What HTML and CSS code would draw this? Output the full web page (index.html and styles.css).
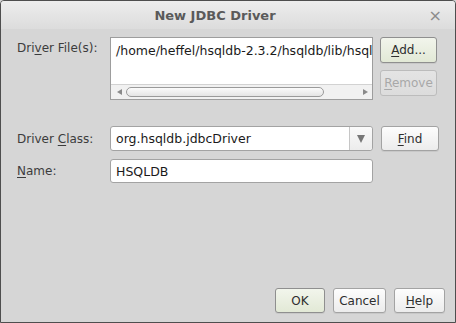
FILE: index.html
```html
<!DOCTYPE html>
<html lang="en">
<head>
  <meta charset="UTF-8" />
  <title>New JDBC Driver</title>
  <link rel="stylesheet" href="styles.css">
</head>
<body>
  <div class="window">
    <div class="titlebar">
      <span class="title">New JDBC Driver</span>
      <span class="close">&times;</span>
    </div>

    <div class="content">
      <div class="row row-files">
        <label class="lbl top">Dri<u>v</u>er File(s):</label>
        <div class="listbox">
          <div class="list-text">/home/heffel/hsqldb-2.3.2/hsqldb/lib/hsqldb.jar</div>
          <div class="hscroll">
            <span class="arrow left"></span>
            <span class="thumb"></span>
            <span class="arrow right"></span>
          </div>
        </div>
        <div class="side">
          <button class="btn default"><u>A</u>dd...</button>
          <button class="btn" disabled><u>R</u>emove</button>
        </div>
      </div>

      <div class="row row-class">
        <label class="lbl">Driver <u>C</u>lass:</label>
        <div class="combo">
          <span class="combo-text">org.hsqldb.jdbcDriver</span>
          <span class="combo-btn"><span class="tri"></span></span>
        </div>
        <button class="btn find"><u>F</u>ind</button>
      </div>

      <div class="row row-name">
        <label class="lbl"><u>N</u>ame:</label>
        <div class="field">HSQLDB</div>
      </div>

      <div class="footer">
        <button class="btn foot default ok">OK</button>
        <button class="btn foot cancel">Cancel</button>
        <button class="btn foot help"><u>H</u>elp</button>
      </div>
    </div>
  </div>
</body>
</html>
```

FILE: styles.css
```css
body {
  margin: 0;
  font-family: 'DejaVu Sans', 'Liberation Sans', sans-serif;
  font-size: 12px;
  background-color: #d6d6d6;
}

.window {
  width: 456px;
  height: 323px;
  box-sizing: border-box;
  border: 1px solid #4e4e4e;
  border-radius: 4px 4px 0 0;
  background-color: #d6d6d6;
  display: flex;
  flex-direction: column;
  overflow: hidden;
}

.titlebar {
  height: 28px;
  flex: none;
  display: flex;
  align-items: center;
  justify-content: center;
  position: relative;
  background: linear-gradient(#ededed, #dcdcdc);
}

.title {
  font-weight: bold;
  font-size: 13px;
  color: #5a5a5a;
  margin-left: -26px;
}

.close {
  position: absolute;
  right: 13px;
  top: 5px;
  font-size: 16px;
  color: #8c8c8c;
}

.content {
  flex: 1;
  display: flex;
  flex-direction: column;
  padding: 8px 0 9px 16px;
}

.row {
  display: flex;
  align-items: center;
}

.row-files {
  align-items: flex-start;
  height: 63px;
}

.row-class {
  margin-top: 26px;
  height: 25px;
}

.row-name {
  margin-top: 8px;
  height: 24px;
}

.lbl {
  width: 93px;
  flex: none;
  color: #3c3c3c;
}

.lbl.top {
  padding-top: 4px;
}

u {
  text-decoration: underline;
  text-underline-offset: 2px;
}

.listbox {
  width: 263px;
  height: 63px;
  flex: none;
  box-sizing: border-box;
  border: 1px solid #9d9d9d;
  background: #fff;
  display: flex;
  flex-direction: column;
  overflow: hidden;
}

.list-text {
  flex: 1;
  padding: 5px 0 0 5px;
  white-space: nowrap;
  color: #1a1a1a;
  font-size: 12.5px;
}

.hscroll {
  height: 14px;
  border-top: 1px solid #d2d2d2;
  background: #f1f1f1;
  display: flex;
  align-items: center;
  padding: 0 4px 0 6px;
  gap: 4px;
}

.arrow {
  width: 0;
  height: 0;
  border-top: 3px solid transparent;
  border-bottom: 3px solid transparent;
}

.arrow.left {
  border-right: 5px solid #8a8a8a;
}

.arrow.right {
  border-left: 5px solid #8a8a8a;
  margin-left: auto;
}

.thumb {
  width: 198px;
  height: 10px;
  box-sizing: border-box;
  border: 1px solid #9a9a9a;
  border-radius: 6px;
  background: linear-gradient(#fbfbfb, #e4e4e4);
}

.side {
  display: flex;
  flex-direction: column;
  gap: 7px;
  margin-left: 7px;
}

.btn {
  font-family: 'DejaVu Sans', 'Liberation Sans', sans-serif;
  font-size: 12px;
  color: #2e2e2e;
  height: 26px;
  width: 57px;
  flex: none;
  box-sizing: border-box;
  border: 1px solid #a3a3a3;
  border-radius: 3px;
  background: linear-gradient(#fdfdfd, #ececec);
  padding: 0;
  box-shadow: 0 1px 0 #c8c8c8;
}

.btn.default {
  border-color: #8f8f8f;
  background: linear-gradient(#f2f5ec, #e2e9d6);
}

.btn:disabled {
  color: #a8a8a8;
  border-color: #bcbcbc;
  background: linear-gradient(#e4e4e4, #dcdcdc);
  box-shadow: none;
}

.btn.find {
  height: 25px;
  width: 58px;
  margin-left: 8px;
}

.combo {
  width: 263px;
  height: 25px;
  flex: none;
  box-sizing: border-box;
  border: 1px solid #a3a3a3;
  border-radius: 3px;
  background: #fff;
  display: flex;
  align-items: center;
}

.combo-text {
  flex: 1;
  padding-left: 5px;
  color: #1a1a1a;
  font-size: 12.5px;
}

.combo-btn {
  width: 22px;
  height: 100%;
  border-left: 1px solid #c6c6c6;
  background: linear-gradient(#fafafa, #ececec);
  border-radius: 0 3px 3px 0;
  display: flex;
  align-items: center;
  justify-content: center;
}

.tri {
  width: 0;
  height: 0;
  border-left: 4px solid transparent;
  border-right: 4px solid transparent;
  border-top: 8px solid #777;
}

.field {
  width: 263px;
  height: 24px;
  flex: none;
  box-sizing: border-box;
  border: 1px solid #a3a3a3;
  border-radius: 3px;
  background: #fff;
  padding: 4px 5px 0;
  color: #1a1a1a;
  font-size: 12.5px;
}

.footer {
  margin-top: auto;
  display: flex;
  justify-content: flex-end;
  gap: 8px;
  padding-right: 10px;
}

.btn.foot {
  height: 25px;
  width: 50px;
}

.btn.cancel {
  width: 53px;
}

.btn.help {
  width: 51px;
}
```
